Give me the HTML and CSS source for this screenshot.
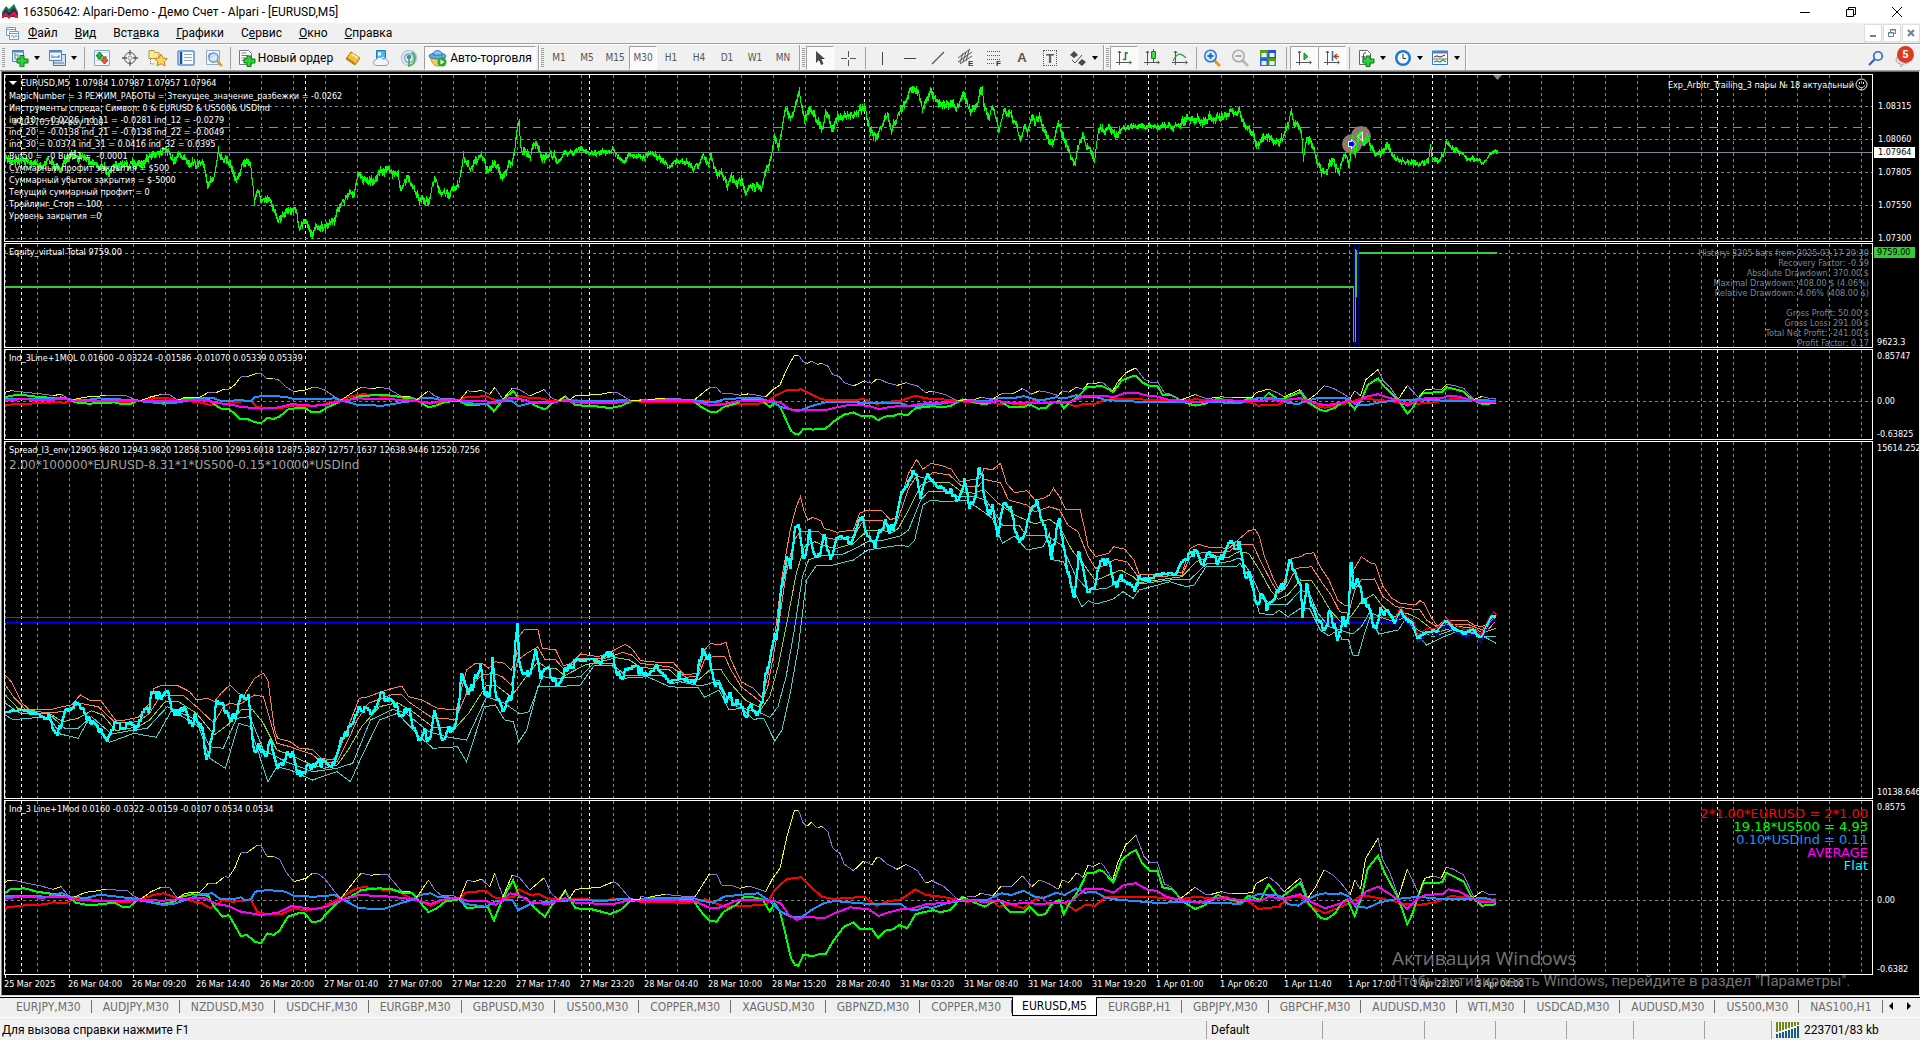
FILE: index.html
```html
<!DOCTYPE html>
<html lang="ru">
<head>
<meta charset="utf-8">
<title>16350642: Alpari-Demo - Демо Счет - Alpari - [EURUSD,M5]</title>
<link rel="stylesheet" href="styles.css">
</head>
<body>
<header class="titlebar">
  <svg class="logo" width="18" height="15" viewBox="0 0 18 15"><path d="M1 8 5 2l3 3 5-5 4 8v3H1z" fill="#1f7a3a"/><path d="M1 11 5 5l3 4 5-5 4 6v3H1z" fill="#23237d"/><path d="m1 12 4-4 3 4 5-5 4 5v2h-3l-2-3-4 4-3-3-2 2H1z" fill="#e0202a"/></svg>
  <h1>16350642: Alpari-Demo - Демо Счет - Alpari - [EURUSD,M5]</h1>
  <div class="win-controls">
    <button aria-label="Свернуть"><svg width="12" height="12"><path d="M1 6.500h10" stroke="#000"/></svg></button>
    <button aria-label="Восстановить"><svg width="12" height="12" fill="none" stroke="#000"><path d="M1.500 3.500h7v7h-7zM3.500 3.500v-2h7v7h-2"/></svg></button>
    <button aria-label="Закрыть"><svg width="12" height="12"><path d="M1 1l10 10M11 1 1 11" stroke="#000"/></svg></button>
  </div>
</header>

<nav class="menubar">
  <svg class="doc-icon" width="15" height="15" viewBox="0 0 15 15" fill="#fff" stroke="#6d9be0"><path d="M1.500 1.500h9v8h-9zM1 3.500h9"/><path d="M4.500 5.500h9v8h-9zM4 7.500h9"/><path d="M6 11l1.500-2 1.500 3 2-3 1 2" fill="none"/></svg>
  <button><u>Ф</u>айл</button><button><u>В</u>ид</button><button>Вст<u>а</u>вка</button><button><u>Г</u>рафики</button><button>С<u>е</u>рвис</button><button><u>О</u>кно</button><button><u>С</u>правка</button>
  <div class="mdi-controls">
    <button aria-label="Свернуть окно"><svg width="10" height="10"><path d="M2 8h6" stroke="#6d7f95" stroke-width="2"/></svg></button>
    <button aria-label="Восстановить окно"><svg width="10" height="10" fill="none" stroke="#6d7f95"><path d="M1.500 4.500h5v4h-5zM1 5h6M3.500 4V1.500h5v4H7M3 2h6"/></svg></button>
    <button aria-label="Закрыть окно"><svg width="10" height="10"><path d="M2 2l6 6M8 2 2 8" stroke="#6d7f95" stroke-width="2"/></svg></button>
  </div>
</nav>

<div class="toolbar">
  <div class="group">
    <span class="grip"></span>
    <button class="tool drop" aria-label="Новый график"><svg width="18" height="18"><path d="M1.500 1.500h11v11h-11z" fill="#eaf3fc" stroke="#4d87c4"/><path d="M1 2.500h12" stroke="#4d87c4" stroke-width="2"/><path d="M4 4v6h7M4 6h2m1-1v4" stroke="#678" fill="none"/><path d="M9 9.500V6.500h4v3.500h4v4h-4v4H9v-4H6v-4z" fill="#2fcf3a" stroke="#0a7a14"/></svg></button>
    <button class="tool drop" aria-label="Профили"><svg width="18" height="18"><path d="M5.500 5.500h12v11h-12z" fill="#cfe2f6" stroke="#3f78b5"/><path d="M1.500 1.500h12v10h-12z" fill="#eaf3fc" stroke="#4d87c4"/><path d="M1 2.500h13" stroke="#4d87c4" stroke-width="2"/><path d="M4 8h7M4 6v3m7-3v3M6 14h10" stroke="#678" fill="none"/></svg></button>
    <span class="sep"></span>
    <button class="tool" aria-label="Обзор рынка"><svg width="18" height="18"><path d="M1.500 1.500h15v15h-15z" fill="#f4f9ff" stroke="#7eaad6"/><path d="M3 3.500h12M3 7.500h12M3 11.500h12" stroke="#c6d8ea"/><path d="M6.500 3 10 7H8v3H5V7H3z" fill="#2fb72f" stroke="#117a11"/><path d="M11.500 15 8 11h2V8h3v3h2z" fill="#f0622c" stroke="#a6310b"/></svg></button>
    <button class="tool" aria-label="Окно данных"><svg width="18" height="18" fill="none" stroke="#555"><circle cx="9" cy="9" r="5.500"/><circle cx="9" cy="9" r="2" stroke="#999"/><path d="M9 1v5m0 6v5M1 9h5m6 0h5" stroke-width="1.300"/></svg></button>
    <button class="tool" aria-label="Навигатор"><svg width="20" height="18"><path d="M1 1.500h5l1 2h4v6H1z" fill="#f9e9a0" stroke="#b99632"/><path d="M2.500 10v5H7" fill="none" stroke="#777" stroke-dasharray="1 1"/><path d="m13 5 2 4 4.500.6-3.200 3.100.8 4.300-4.100-2.200L9 17l.7-4.300L6.500 9.600 11 9z" fill="#fbd45a" stroke="#b98a1e"/></svg></button>
    <button class="tool" aria-label="Терминал"><svg width="18" height="18"><rect x="1" y="2" width="16" height="14" rx="1" fill="#f5f9ff" stroke="#5a93cf" stroke-width="1.500"/><path d="M4 3v12" stroke="#1f4f86" stroke-width="2.500"/><path d="M7 5.500h8M7 8.500h8M7 11.500h8" stroke="#9aa9ba"/></svg></button>
    <button class="tool" aria-label="Тестер стратегий"><svg width="18" height="18"><path d="M1.500 1.500h13v14h-13z" fill="#f3f7fc" stroke="#8fabc9"/><path d="M3 8l2-4 2 5 2-4 2 2" fill="none" stroke="#778"/><circle cx="8.500" cy="8.500" r="4.500" fill="#cfe5fb" fill-opacity=".8" stroke="#6a96c8" stroke-width="1.500"/><path d="m12 12 5 5" stroke="#d5a11e" stroke-width="2.500"/></svg></button>
    <span class="sep slim"></span>
    <button class="tool wide"><svg width="18" height="18"><path d="M1.500 1.500h9l3 3v11h-12z" fill="#fff" stroke="#778"/><path d="M3.500 4h5M3.500 6.500h7M3.500 9h5M3.500 11.500h4" stroke="#778"/><path d="M9 9.500V7h4v3h4v4h-4v3.500H9V14H6v-4z" fill="#2fcf3a" stroke="#0a7a14"/></svg>Новый ордер</button>
    <button class="tool" aria-label="MetaEditor"><svg width="18" height="18"><path d="M2 10 7 3l9 6-5 7z" fill="#f3c33f" stroke="#a87412"/><path d="m2 10 9 6v-2.500L3 8z" fill="#c8870f"/><path d="m8 5 6 4" stroke="#fdf0b0" stroke-width="2"/></svg></button>
    <button class="tool" aria-label="Облако"><svg width="18" height="18"><path d="M4.500 1.500h9v9h-9z" fill="#4db8f0" stroke="#1c77c4"/><path d="M6 3.500h3v3H6z" fill="#fff"/><path d="M6 8.500h6" stroke="#fff"/><path d="M3.500 16.500a3 3 0 0 1 .5-5.800 4 4 0 0 1 7-.5 3.300 3.300 0 0 1 3.500 6.300z" fill="#f2f5fa" stroke="#8a9cb8"/></svg></button>
    <button class="tool" aria-label="Сигналы"><svg width="18" height="18" fill="none"><circle cx="9" cy="9" r="7.500" stroke="#b3c9df" stroke-width="1.500"/><circle cx="9" cy="9" r="4.500" stroke="#7fa7cf" stroke-width="1.500"/><circle cx="9" cy="8" r="2.300" fill="#2b8cd0"/><path d="M9 9v8a8 8 0 0 0 3-14" stroke="#4fb04f" stroke-width="1.800"/></svg></button>
    <button class="tool wide pressed auto" aria-pressed="true"><svg width="20" height="18"><path d="M2 8c2 6 4 9 8 9s6-3 7-9z" fill="#f6cf57" stroke="#b98d22"/><ellipse cx="9.500" cy="7" rx="8.500" ry="3" fill="#62a9dc" stroke="#2e78b0"/><path d="M5 6c0-6 9-6 9 0z" fill="#8ac6ee" stroke="#2e78b0"/><circle cx="14" cy="13" r="4.500" fill="#1fae2a"/><path d="m12.500 10.500 4 2.500-4 2.500z" fill="#fff"/></svg>Авто-торговля</button>
  </div>
  <div class="group">
    <span class="grip"></span>
    <button class="tool">M1</button><button class="tool">M5</button><button class="tool">M15</button><button class="tool pressed" aria-pressed="true">M30</button><button class="tool">H1</button><button class="tool">H4</button><button class="tool">D1</button><button class="tool">W1</button><button class="tool">MN</button>
  </div>
  <div class="group">
    <span class="grip"></span>
    <button class="tool pressed" aria-label="Курсор" aria-pressed="true"><svg width="18" height="18"><path d="M5 2v12l3-3 2 5 2.500-1-2-5H14z" fill="#4a4a4a"/></svg></button>
    <button class="tool" aria-label="Перекрестие"><svg width="18" height="18"><path d="M9.500 2v6m0 3v6M2 9.500h6m3 0h6" stroke="#555"/></svg></button>
    <span class="sep mid"></span>
    <button class="tool" aria-label="Вертикальная линия"><svg width="18" height="18"><path d="M9.500 3v13" stroke="#444"/></svg></button>
    <button class="tool" aria-label="Горизонтальная линия"><svg width="18" height="18"><path d="M3 9.500h12" stroke="#444"/></svg></button>
    <button class="tool" aria-label="Трендовая линия"><svg width="18" height="18"><path d="M3 15 15 3" stroke="#555" stroke-width="1.200"/></svg></button>
    <button class="tool" aria-label="Канал"><svg width="18" height="20"><path d="M1 10 13 1M1 14 15 4M3 16 15 8M3 15 6 5m0 9L9 4m0 9 3-11" stroke="#555" fill="none"/><text x="11" y="18" class="glyph">E</text></svg></button>
    <button class="tool" aria-label="Фибоначчи"><svg width="18" height="20"><path d="M2 3.500h14M2 7.500h14M2 11.500h14M2 15.500h8" stroke="#555" stroke-dasharray="1 1"/><text x="11" y="18" class="glyph">F</text></svg></button>
    <button class="tool letter" aria-label="Текст">A</button>
    <button class="tool letter" aria-label="Метка"><span class="boxed">T</span></button>
    <button class="tool drop" aria-label="Стрелки"><svg width="18" height="18" fill="#4a4a4a"><path d="m1 6 4-4 4 4-4 3zM17 13l-4 4-4-3 4-4z"/><path d="m3 11 3 3 7-8" fill="none" stroke="#4a4a4a"/></svg></button>
  </div>
  <div class="group">
    <span class="grip"></span>
    <button class="tool pressed" aria-label="Бары" aria-pressed="true"><svg width="18" height="18" fill="none" stroke="#555"><path d="M4.500 2v14M1 13.500h15M3 4l1.500-2L6 4m8.500 8 2 1.500-2 1.500"/><path d="M10.500 3v8M10 4h3M8 10.500h3" stroke="#1a8a1a" stroke-width="1.500"/></svg></button>
    <button class="tool" aria-label="Свечи"><svg width="18" height="18" fill="none" stroke="#555"><path d="M4.500 2v14M1 13.500h15M3 4l1.500-2L6 4m8.500 8 2 1.500-2 1.500"/><path d="M10.500 0v13" stroke="#1a8a1a"/><path d="M8.500 2.500h4v7h-4z" fill="#3fd64a" stroke="#1a8a1a"/></svg></button>
    <button class="tool" aria-label="Линия"><svg width="18" height="18" fill="none" stroke="#555"><path d="M4.500 2v14M1 13.500h15M3 4l1.500-2L6 4m8.500 8 2 1.500-2 1.500"/><path d="M2 12c4-8 7-9 13-3" stroke="#2a9a3a" stroke-width="1.200"/></svg></button>
    <span class="sep slim"></span>
    <button class="tool" aria-label="Увеличить"><svg width="18" height="18"><path d="m11 11 6 6" stroke="#d5a11e" stroke-width="3"/><circle cx="7.500" cy="7" r="5.800" fill="#d9ecfb" stroke="#2f78c4" stroke-width="1.500"/><path d="M4.500 7h6m-3-3v6" stroke="#1f6cc0" stroke-width="2"/></svg></button>
    <button class="tool" aria-label="Уменьшить"><svg width="18" height="18"><path d="m11 11 6 6" stroke="#bbb" stroke-width="3"/><circle cx="7.500" cy="7" r="5.800" fill="#eee" stroke="#aaa" stroke-width="1.500"/><path d="M4.500 7h6" stroke="#aaa" stroke-width="2"/></svg></button>
    <button class="tool" aria-label="Упорядочить"><svg width="18" height="18"><path d="M1 1h8v8H1z" fill="#4da01c"/><path d="M9 1h8v8H9z" fill="#2553c4"/><path d="M1 9h8v8H1z" fill="#2a62d8"/><path d="M9 9h8v8H9z" fill="#4da01c"/><path d="M2.500 4h5v4h-5zM10.500 4h5v4h-5zM2.500 12h5v4h-5zM10.500 12h5v4h-5z" fill="#e6f0fb"/></svg></button>
    <span class="sep"></span>
    <button class="tool pressed" aria-label="Автосдвиг" aria-pressed="true"><svg width="18" height="18" fill="none" stroke="#555"><path d="M4.500 2v14M1 13.500h15M3 4l1.500-2L6 4m8.500 8 2 1.500-2 1.500"/><path d="m9 4 4 3.500L9 11z" fill="#2fc43a" stroke="#138a1c"/></svg></button>
    <button class="tool pressed" aria-label="Сдвиг графика" aria-pressed="true"><svg width="18" height="18" fill="none" stroke="#555"><path d="M4.500 2v14M1 13.500h15M3 4l1.500-2L6 4m8.500 8 2 1.500-2 1.500"/><path d="M9.500 2v10" stroke="#2a6ab0" stroke-width="1.500"/><path d="M16 7.500h-4m2-2.500-3 2.500 3 2.500" stroke="#c2410c" stroke-width="1.300"/></svg></button>
    <span class="sep mid"></span>
    <button class="tool drop" aria-label="Индикаторы"><svg width="18" height="18"><path d="M2.500 1.500h8l3 3v11h-11z" fill="#fff" stroke="#666"/><path d="M9 4c-3-1-2.500 2-3 9M4.500 8H8" fill="none" stroke="#333"/><path d="M9 9.500V7h4v3h4v4h-4v3.500H9V14H6v-4z" fill="#2fcf3a" stroke="#0a7a14"/></svg></button>
    <button class="tool drop" aria-label="Периоды"><svg width="18" height="18"><circle cx="9" cy="9" r="8" fill="#1e78d0"/><circle cx="9" cy="9" r="5.500" fill="#f3f8fd"/><path d="M9 5v4.500h3" fill="none" stroke="#234"/></svg></button>
    <button class="tool drop" aria-label="Шаблоны"><svg width="18" height="18"><path d="M1.500 2.500h15v13h-15z" fill="#fff" stroke="#3f78b5"/><path d="M1 3h16" stroke="#3f88cf" stroke-width="3"/><path d="M3 8l3-1 3 1 5-2" fill="none" stroke="#a33a14" stroke-width="1.300"/><path d="M2 10h14" stroke="#3f78b5"/><path d="m3 13 3-1 3 1 3-2 3 2" fill="none" stroke="#2a9a3a" stroke-width="1.300"/></svg></button>
  </div>
  <div class="corner">
    <button class="tool" aria-label="Поиск"><svg width="16" height="16" fill="none"><circle cx="10" cy="6" r="4.300" stroke="#2a62c8" stroke-width="1.600"/><path d="m7 9-6 6" stroke="#2a62c8" stroke-width="2.200"/></svg></button>
    <button class="tool chat" aria-label="Сообщения"><svg width="18" height="18"><path d="M1 10c0-6 14-6 14 0 0 4-5 5-7 5l-2 3v-3C3 15 1 13 1 10z" fill="#e2e2e6" stroke="#aaa"/></svg><span class="badge">5</span></button>
  </div>
</div>

<main class="workspace">
  <section class="panel price">
    <div class="plot">
      <svg id="price" viewBox="5 75 1867 166" preserveAspectRatio="none"></svg>
      <div class="note order">#403705134 buy 1.00</div>
      <div class="note head"><span class="tri"></span>EURUSD,M5&nbsp; 1.07984 1.07987 1.07957 1.07964</div>
      <div class="note comments">MagicNumber = 3 РЕЖИМ_РАБОТЫ = 3текущее_значение_разбежки = -0.0262<br>Инструменты спреда; Символ: 0 &amp; EURUSD &amp; US500&amp; USDInd<br>ind_10 = -0.0226 ind_11 = -0.0281 ind_12 = -0.0279<br>ind_20 = -0.0138 ind_21 = -0.0138 ind_22 = -0.0049<br>ind_30 = 0.0374 ind_31 = 0.0416 ind_32 = 0.0395<br>Buf50 =&nbsp; -0 Buf51 =&nbsp; -0.0001<br>Суммарный профит закрытия = $500<br>Суммарный убыток закрытия = $-5000<br>Текущий суммарный профит = 0<br>Трейлинг_Стоп = 100<br>Уровень закрытия =0</div>
      <div class="note expert">Exp_Arbitr_Trailing_3 пары № 18 актуальный<svg width="13" height="13" fill="none" stroke="#fff"><circle cx="6.500" cy="6.500" r="5.500"/><path d="M3.500 7.500c1 3 5 3 6 0M4.500 4v2m4-2v2"/></svg></div>
    </div>
    <div class="axis"><span>1.08315</span><span>1.08060</span><span>1.07805</span><span>1.07550</span><span>1.07300</span><b class="tag">1.07964</b></div>
  </section>
  <section class="panel equity">
    <div class="plot">
      <svg id="equity" viewBox="5 244 1867 103" preserveAspectRatio="none"></svg>
      <div class="note name">Equity_virtual Total 9759.00</div>
      <div class="note stats">History: 3205 bars from 2025.03.17 20:30<br>Recovery Factor: -0.59<br>Absolute Drawdown: 370.00 $<br>Maximal Drawdown: 408.00 $ (4.06%)<br>Relative Drawdown: 4.06% (408.00 $)<br><br>Gross Profit: 50.00 $<br>Gross Loss: 291.00 $<br>Total Net Profit: -241.00 $<br>Profit Factor: 0.17</div>
    </div>
    <div class="axis"><b class="tag">9759.00</b><span>9623.3</span></div>
  </section>
  <section class="panel mql">
    <div class="plot">
      <svg id="mql" viewBox="5 350 1867 89" preserveAspectRatio="none"></svg>
      <div class="note name">Ind_3Line+1MQL 0.01600 -0.03224 -0.01586 -0.01070 0.05339 0.05339</div>
    </div>
    <div class="axis"><span>0.85747</span><span>0.00</span><span>-0.63825</span></div>
  </section>
  <section class="panel spread">
    <div class="plot">
      <svg id="spread" viewBox="5 442 1867 356" preserveAspectRatio="none"></svg>
      <div class="note name">Spread_I3_env 12905.9820 12943.9820 12858.5100 12993.6018 12875.3827 12757.1637 12638.9446 12520.7256</div>
      <div class="note formula">2.00*100000*EURUSD-8.31*1*US500-0.15*10000*USDInd</div>
    </div>
    <div class="axis"><span>15614.252</span><span>10138.646</span></div>
  </section>
  <section class="panel mod">
    <div class="plot">
      <svg id="mod" viewBox="5 801 1867 173" preserveAspectRatio="none"></svg>
      <div class="note name">Ind_3 Line+1Mod 0.0160 -0.0322 -0.0159 -0.0107 0.0534 0.0534</div>
      <div class="note legend"><span class="red">2*1.00*EURUSD = 2*1.00</span><span class="lime">19.18*US500 = 4.93</span><span class="blue">0.10*USDInd = 0.11</span><span class="magenta">AVERAGE</span><span class="aqua">Flat</span></div>
    </div>
    <div class="axis"><span>0.8575</span><span>0.00</span><span>-0.6382</span></div>
  </section>
  <div class="timeline"><span>25 Mar 2025</span><span>26 Mar 04:00</span><span>26 Mar 09:20</span><span>26 Mar 14:40</span><span>26 Mar 20:00</span><span>27 Mar 01:40</span><span>27 Mar 07:00</span><span>27 Mar 12:20</span><span>27 Mar 17:40</span><span>27 Mar 23:20</span><span>28 Mar 04:40</span><span>28 Mar 10:00</span><span>28 Mar 15:20</span><span>28 Mar 20:40</span><span>31 Mar 03:20</span><span>31 Mar 08:40</span><span>31 Mar 14:00</span><span>31 Mar 19:20</span><span>1 Apr 01:00</span><span>1 Apr 06:20</span><span>1 Apr 11:40</span><span>1 Apr 17:00</span><span>1 Apr 22:20</span><span>2 Apr 04:00</span></div>
  <div class="watermark"><strong>Активация Windows</strong><span>Чтобы активировать Windows, перейдите в раздел "Параметры".</span></div>
</main>

<nav class="tabs">
  <button>EURJPY,M30</button><button>AUDJPY,M30</button><button>NZDUSD,M30</button><button>USDCHF,M30</button><button>EURGBP,M30</button><button>GBPUSD,M30</button><button>US500,M30</button><button>COPPER,M30</button><button>XAGUSD,M30</button><button>GBPNZD,M30</button><button>COPPER,M30</button><button class="active" aria-current="true">EURUSD,M5</button><button>EURGBP,H1</button><button>GBPJPY,M30</button><button>GBPCHF,M30</button><button>AUDUSD,M30</button><button>WTI,M30</button><button>USDCAD,M30</button><button>AUDUSD,M30</button><button>US500,M30</button><button>NAS100,H1</button>
  <div class="scroll"><button aria-label="Назад"><svg width="6" height="8"><path d="M5 0v8L1 4z"/></svg></button><button aria-label="Вперед"><svg width="6" height="8"><path d="M1 0v8l4-4z"/></svg></button></div>
</nav>

<footer class="status">
  <span class="hint">Для вызова справки нажмите F1</span>
  <span class="cell w116">Default</span><span class="cell w102"></span><span class="cell w71"></span><span class="cell w71"></span><span class="cell w67"></span><span class="cell w71"></span><span class="cell w67"></span>
  <span class="cell net"><svg width="24" height="16"><path d="M1 0v10M4 0v9M7 0v8M10 0v7M13 0v6M16 0v5M19 0v4M22 0v3" stroke="#6f8a1c" stroke-width="2"/><path d="M1 16v-4M4 16v-5M7 16v-6M10 16V9M13 16V8M16 16V7M19 16V6M22 16V4" stroke="#1a5a86" stroke-width="2"/></svg>223701/83 kb</span>
</footer>
<script src="chart.js"></script>
</body>
</html>
```
FILE: styles.css
```css
:root {
  --ui: Roboto, "Noto Sans", sans-serif;
  --chart: "DejaVu Sans Condensed", "DejaVu Sans", sans-serif;
  --face: #f0f0f0;
  --grid: #778899;
}
* { box-sizing: border-box; }
body {
  margin: 0;
  height: 100vh;
  display: flex;
  flex-direction: column;
  background: var(--face);
  font: 12px/16px var(--ui);
  color: #000;
  overflow: hidden;
}
button { border: 0; background: none; padding: 0; margin: 0; font: inherit; color: inherit; }
svg { display: block; flex: none; }

.titlebar { height: 23px; background: #fff; display: flex; align-items: center; padding-left: 1px; flex: none; }
.titlebar h1 { margin: 0 0 0 4px; font: inherit; }
.win-controls { margin-left: auto; display: flex; }
.win-controls button { width: 46px; height: 20px; display: grid; place-items: center; }

.menubar { height: 20px; display: flex; align-items: center; padding-left: 5px; flex: none; }
.menubar > button { padding: 0 9px 0 8px; }
.mdi-controls { margin-left: auto; display: flex; gap: 1px; }
.mdi-controls button { width: 18px; height: 18px; background: #fff; border: 1px solid #dedede; display: grid; place-items: center; }

.toolbar { height: 28px; border-top: 1px solid #a0a0a0; box-shadow: inset 0 1px #fff; border-bottom: 1px solid #a0a0a0; display: flex; padding-top: 1px; flex: none; }
.group { display: flex; align-items: center; padding-right: 2px; border-right: 1px solid #a0a0a0; box-shadow: 1px 0 #fff; }
.grip { width: 3px; height: 20px; margin: 0 1px 0 2px; background: repeating-linear-gradient(#a0a0a0 0 1px, #f0f0f0 1px 2px); }
.tool { width: 28px; height: 24px; display: flex; align-items: center; justify-content: center; color: #555; font: 10px/14px var(--chart); }
.drop { width: 37px; justify-content: flex-start; padding-left: 5px; gap: 5px; }
.drop::after { content: ""; border: 3px solid transparent; border-top: 4px solid #000; border-bottom: 0; }
.wide { width: 107px; color: #000; font: 12px/16px var(--ui); gap: 2px; }
.auto { width: 112px; margin-left: 1px; }
.pressed { background: #fafafa; border: 1px solid #a0a0a0; border-right-color: #fff; border-bottom-color: #fff; }
.letter { font: bold 13px/16px "Liberation Sans", sans-serif; }
.boxed { border: 1px dotted #555; width: 14px; height: 16px; line-height: 15px; text-align: center; }
.glyph { font: bold 8px "Liberation Sans", sans-serif; fill: #333; stroke: none; }
.sep { width: 8px; height: 22px; background: linear-gradient(#a0a0a0, #a0a0a0) center / 1px 100% no-repeat; }
.sep.slim { width: 4px; }
.sep.mid { width: 6px; }
.corner { margin-left: auto; display: flex; align-items: center; padding-right: 2px; }
.chat { position: relative; }
.badge { position: absolute; left: 7px; top: 0; width: 17px; height: 17px; border-radius: 50%; background: #dd3a22; color: #fff; font: bold 11px/17px var(--ui); text-align: center; }

.workspace {
  flex: 1;
  min-height: 0;
  display: flex;
  flex-direction: column;
  gap: 1px;
  position: relative;
  background: #000;
  color: #fff;
  font: 9px/12px var(--chart);
  margin: 0 1px 0 1px;
  border-left: 1px solid #808080;
  border-top: 1px solid #696969;
  padding: 2px 0 0 2px;
}
.panel { display: flex; min-height: 0; flex-basis: 0; }
.price { flex-grow: 168; }
.equity { flex-grow: 105; }
.mql { flex-grow: 91; }
.spread { flex-grow: 358; }
.mod { flex-grow: 175; }
.plot { flex: 1; border: 1px solid #fff; position: relative; overflow: hidden; min-width: 0; }
.plot > svg { width: 100%; height: 100%; }
.axis { width: 46px; flex: none; position: relative; white-space: nowrap; padding-left: 4px; display: flex; flex-direction: column; justify-content: space-between; }
.price .axis { padding-top: 26px; justify-content: flex-start; gap: 21px; padding-left: 5px; }
.equity .axis { padding: 4px 0 0 4px; }
.spread .axis { padding: 1px 0 1px 4px; }
.mql .axis, .mod .axis { display: grid; padding-top: 1px; grid-template-rows: auto 8fr auto 5fr auto; }
.mod .axis { grid-template-rows: auto 7fr auto 5fr auto; }
.axis span:nth-child(2) { grid-row: 3; }
.axis span:nth-child(3) { grid-row: 5; }
.tag { font-weight: normal; line-height: 11px; height: 11px; padding-left: 4px; margin-left: -4px; width: 41px; }
.equity .tag { background: #32cd32; color: #000; margin-left: -3px; padding-left: 3px; }
.price .tag { position: absolute; left: 1px; top: 73px; margin: 0; background: #fff; color: #000; }

.note { position: absolute; left: 4px; white-space: nowrap; }
.head { top: 2px; display: flex; align-items: center; }
.tri { border: 4px solid transparent; border-top: 4px solid #fff; border-bottom: 0; margin-right: 4px; }
.comments { top: 15px; }
.order { top: 41px; left: 7px; color: #d8e8d8; }
.expert { left: auto; right: 4px; top: 3px; display: flex; align-items: center; gap: 1px; }
.name { top: 2px; }
.stats { left: auto; right: 3px; top: 4px; text-align: right; line-height: 10px; color: var(--grid); }
.formula { top: 16px; font: 12px/14px "DejaVu Sans", sans-serif; color: #a0a0a0; }
.legend { left: auto; right: 4px; top: 6px; display: flex; flex-direction: column; align-items: flex-end; font: 13px/13px "DejaVu Sans", sans-serif; }
.red { color: #f00; }
.lime { color: #0f0; }
.blue { color: #1e90ff; }
.magenta { color: #f0f; }
.aqua { color: #0ff; }

.timeline { display: flex; height: 20px; flex: none; margin-top: -1px; }
.timeline span { width: 64px; flex: none; white-space: nowrap; padding-top: 3px; position: relative; }
.timeline span::before { content: ""; position: absolute; left: 1px; top: 0; width: 1px; height: 3px; background: #fff; }
.watermark { position: absolute; left: 1390px; bottom: 4px; display: flex; flex-direction: column; color: #747474; font: 15px/20px var(--ui); white-space: nowrap; }
.watermark strong { font: 19px/26px "Open Sans", sans-serif; }

.tabs { height: 23px; flex: none; display: flex; align-items: flex-start; border-top: 1px solid #d0d0d0; color: #6d6d6d; padding-left: 5px; border-bottom: 1px solid #fff; background: linear-gradient(#fff 0 1px, #000 1px 2px, #f0f0f0 2px); font: 12px/14px var(--chart); }
.tabs > button { height: 21px; padding: 1px 11px 0; position: relative; flex: none; }
.tabs > button::after { content: ""; position: absolute; right: 0; top: 4px; height: 13px; border-right: 1px solid #6d6d6d; }
.tabs > .active { background: #fff; color: #000; border: 1px solid #000; border-top: 0; height: 19px; margin-top: 1px; padding: 0 9px; }
.tabs > .active::after { display: none; }
.scroll { margin-left: auto; display: flex; gap: 12px; padding: 6px 8px 0 0; }

.status { height: 22px; flex: none; display: flex; padding-top: 3px; line-height: 18px; padding-left: 2px; }
.hint { flex: 1; }
.cell { border-left: 1px solid #a0a0a0; padding-left: 4px; height: 18px; }
.w116 { width: 116px; }
.w102 { width: 102px; }
.w71 { width: 71px; }
.w67 { width: 67px; }
.net { width: 149px; display: flex; align-items: center; gap: 4px; }
```
FILE: chart.js
```js
const NS = 'http://www.w3.org/2000/svg';
const SLATE = '#778899';
const DAYS = [21, 305, 589, 864, 1148, 1432, 1717];

function path(svg, d, stroke, width = 1, dash) {
  const p = document.createElementNS(NS, 'path');
  p.setAttribute('d', d);
  p.setAttribute('fill', 'none');
  p.setAttribute('stroke', stroke);
  p.setAttribute('stroke-width', width);
  p.setAttribute('shape-rendering', 'crispEdges');
  if (dash) p.setAttribute('stroke-dasharray', dash);
  svg.append(p);
}

// Small deterministic generator for the bar ranges.
let state = 7;
function rand() {
  state = (state * 16807) % 2147483647;
  return state / 2147483647;
}

function grid(svg, rows, y0, y1) {
  for (let x = 5; x < 1872; x += 32) path(svg, `M${x + 0.5} ${y0}V${y1}`, SLATE, 1, '3 3');
  DAYS.forEach(x => path(svg, `M${x + 0.5} ${y0}V${y1}`, '#fff', 1, '3 3'));
  rows.forEach(y => path(svg, `M5 ${y + 0.5}H1872`, SLATE, 1, '3 3'));
}

const nums = s => {
  const n = s.trim().split(/[\s,]+/).map(Number), out = [];
  for (let i = 0; i < n.length; i += 2) out.push([n[i], n[i + 1]]);
  return out;
};
// Each series is stored in consecutive blocks with their own origin and horizontal scale.
const join = (blocks, origins, base, yscale = 3) =>
  blocks.flatMap((s, i) => nums(s).map(([x, y]) => [origins[i][0] + x / origins[i][1], base + y / yscale]));
const line = pts => 'M' + pts.map(p => p[0].toFixed(1) + ' ' + p[1].toFixed(1)).join('L');

function at(pts, x) {
  let i = 1;
  while (i < pts.length - 1 && pts[i][0] < x) i++;
  const [a, b] = [pts[i - 1], pts[i]];
  return b[0] === a[0] ? b[1] : a[1] + (b[1] - a[1]) * Math.min(1, Math.max(0, (x - a[0]) / (b[0] - a[0])));
}
// Bar ranges are narrow in the quiet sessions and wide in the active ones.
const range = x => (x > 555 && x < 705) || (x > 1120 && x < 1180) ? 4 : x > 1455 ? 3 : x > 1390 ? 4 : 6;
function bars(pts) {
  let d = '', c = 0;
  for (let x = pts[0][0]; x <= pts[pts.length - 1][0]; x++) {
    const amp = range(x);
    c = c * 0.5 + (rand() - 0.5) * amp;
    const y = at(pts, x) + c, r = (0.4 + rand()) * amp / 2;
    d += `${d ? 'L' : 'M'}${x + 0.5} ${(y - r).toFixed(1)}V${(y + r).toFixed(1)}`;
  }
  return d;
}

/* ---- price ---- */
const price = document.getElementById('price');
grid(price, [106, 139, 172, 205, 238], 75, 241);
path(price, 'M5 127.5H1872', '#32cd32', 1, '9 6 3 6');
path(price, 'M5 152.5H1872', SLATE);
const quote = nums(`5,160 21,159 32,163 43,164 50,161 59,169 70,158 80,155 89,159 102,168 111,171 118,165 125,167 132,164 143,162 152,152 168,151 173,159 184,154 189,161 196,163 204,167 207,183 214,178 218,155 225,158 230,165 236,178 238,172 245,161 250,164 254,200 257,190 261,201 270,203 279,218 286,210 296,207 299,230 304,222 311,233 316,230 329,223 334,218 343,200 354,190 357,178 364,180 373,180 382,169 388,172 398,177 400,190 409,178 412,188 420,200 429,200 434,182 445,196 459,183 463,158 469,168 481,154 487,171 493,163 502,175 511,162 514,156 517,127 519,126 520,150 530,155 536,141 541,155 544,160 550,155 557,160 564,152 573,153 579,150 589,153 605,152 613,148 615,155 622,161 632,154 644,157 652,154 660,159 667,166 679,162 687,162 693,168 699,164 703,152 708,168 710,156 716,175 722,176 727,187 731,178 735,185 742,180 745,190 756,185 760,190 763,186 764,175 769,163 772,150 774,138 778,145 782,128 785,110 791,118 795,105 799,92 804,118 810,108 816,120 822,128 825,114 832,128 837,116 844,114 854,116 860,106 865,112 869,128 876,138 883,122 887,115 891,130 897,117 905,101 909,93 918,92 922,108 928,92 931,92 935,99 948,106 958,106 964,95 970,112 977,106 979,92 982,88 983,102 989,116 992,106 998,130 1004,112 1011,114 1015,125 1021,138 1024,126 1027,134 1031,115 1034,123 1039,117 1043,128 1051,144 1058,127 1062,132 1067,147 1071,160 1074,166 1079,142 1083,135 1087,148 1094,160 1098,130 1108,130 1117,135 1122,129 1136,126 1138,129 1150,126 1163,125 1172,127 1182,123 1187,117 1190,121 1197,116 1204,124 1210,115 1220,118 1227,116 1232,112 1239,112 1242,122 1248,130 1253,132 1255,144 1259,146 1263,139 1268,138 1275,147 1283,137 1288,126 1291,112 1293,121 1297,121 1301,131 1303,158 1305,146 1307,139 1312,143 1315,154 1321,172 1327,168 1332,157 1335,167 1339,170 1343,155 1349,165 1352,134 1355,154 1357,136 1360,130 1363,144 1367,136 1369,146 1376,152 1382,152 1387,145 1392,156 1400,160 1410,163 1418,165 1428,162 1430,147 1432,161 1437,160 1443,154 1446,141 1450,148 1462,153 1467,160 1475,159 1483,164 1488,156 1495,149 1497,152`);
price.insertAdjacentHTML('beforeend', '<g fill="#8b7b6f"><circle cx="1352" cy="144" r="10"/><circle cx="1361" cy="136" r="10"/></g>');
path(price, bars(quote), '#0f0');
price.insertAdjacentHTML('beforeend', '<path d="M1348.500 141.500h3v-2l4 4.500-4 4.500v-2h-3z" fill="#00f" stroke="#fff"/><path d="M1362.500 132v9l-5-4.500z" fill="none" stroke="#fff"/><path d="M1493 75h9l-4.500 5z" fill="#778899"/>');

/* ---- equity ---- */
const equity = document.getElementById('equity');
grid(equity, [], 244, 347);
path(equity, 'M5 253.5H1872', '#32cd32', 1, '3 3');
path(equity, 'M1354.500 244V347M1358.500 244V347', '#000080');
path(equity, 'M5 287H1353M1359 253H1497', '#32cd32', 2);
path(equity, 'M1353.500 286V342M1355.500 249V342', '#32cd32');
path(equity, 'M1356 250V297', '#32cd32', 2);

/* ---- three-line indicator, drawn in two panels ---- */
const THIRDS = [[0, 2.45], [640, 2.45], [1280, 2.45]];
const lines = {
  red: ['12,323 60,316 110,313 130,307 160,310 185,295 220,298 245,302 270,305 300,305 320,305 345,298 375,285 400,280 430,292 460,300 495,310 515,325 530,315 545,300 570,305 590,303 615,300 630,335 650,342 690,342 720,325 750,332 790,322 810,308 835,293 865,270 890,260 940,270 975,272 1000,290 1030,305 1055,317 1090,298 1125,295 1140,278 1190,272 1210,292 1230,296 1260,290 1270,268 1300,285 1320,282 1345,298 1390,296 1480,300 1520,296 1568,303',
    '0,305 50,307 120,308 160,298 185,310 210,320 260,318 310,313 330,270 360,237 395,232 420,262 445,290 475,297 550,290 580,318 600,306 640,298 675,268 700,285 740,290 780,300 800,305 860,300 880,320 905,312 940,325 965,300 985,292 1005,318 1025,302 1040,310 1068,332 1090,315 1115,317 1140,292 1175,290 1260,292 1325,298 1360,290 1400,295 1440,292 1460,305 1490,303 1515,327 1568,320',
    '0,315 30,290 50,290 75,320 110,340 130,330 170,310 200,285 230,292 275,302 300,312 340,315 380,307 420,288 460,293 490,300 520,300 530,295'],
  lime: ['12,280 25,268 60,265 90,275 130,282 170,292 185,308 215,315 235,314 280,308 300,320 318,320 335,300 400,312 425,305 445,290 470,283 510,287 525,320 545,350 560,345 575,375 590,408 605,405 625,425 640,430 655,400 670,405 685,392 705,350 730,340 745,338 765,367 785,363 800,340 835,300 860,290 885,270 930,265 960,268 990,280 1010,280 1025,300 1050,337 1070,325 1090,305 1125,298 1145,325 1180,320 1195,320 1210,362 1230,300 1257,240 1272,290 1290,295 1310,325 1335,350 1355,310 1370,298 1385,272 1397,300 1410,325 1450,328 1495,342 1520,330 1545,303 1568,300',
    '0,298 60,300 130,300 150,335 170,362 188,365 205,335 235,315 255,290 270,290 300,298 318,335 330,310 343,335 355,395 370,475 380,495 388,497 400,465 425,468 440,462 455,462 475,420 500,380 523,367 540,387 568,387 583,413 600,392 620,388 635,375 655,385 675,343 700,335 720,330 735,337 760,330 790,290 820,308 845,320 865,305 880,300 905,335 940,336 955,320 975,345 993,343 1010,310 1028,300 1038,342 1050,315 1075,270 1095,220 1110,220 1125,210 1135,215 1160,247 1180,180 1200,160 1215,150 1230,190 1248,212 1268,212 1280,262 1305,268 1330,305 1360,327 1385,315 1415,285 1440,298 1460,300 1470,310 1490,287 1520,300 1540,253 1560,285',
    '0,295 50,248 70,310 100,355 115,357 135,340 150,310 165,298 183,348 200,290 215,205 240,167 255,215 275,260 290,295 312,373 325,340 335,300 350,250 375,250 398,247 408,218 430,232 450,245 470,292 495,317 530,313'],
  '#1e90ff': ['12,287 60,288 120,290 150,278 175,292 215,293 240,285 270,287 300,292 335,297 360,305 400,315 425,312 455,300 490,283 520,280 540,298 570,298 590,292 600,300 615,298 625,275 655,270 700,275 720,288 770,290 820,285 850,305 880,325 940,327 985,308 1010,300 1030,285 1055,280 1075,292 1125,293 1140,312 1190,320 1215,303 1255,300 1270,330 1300,312 1340,305 1380,302 1420,300 1480,303 1525,296 1568,300',
    '0,296 60,294 130,293 150,302 180,308 205,290 240,285 290,280 320,305 345,335 370,350 395,352 420,330 450,310 475,303 560,312 640,312 655,328 680,330 700,320 715,325 750,310 785,302 850,300 885,280 910,285 940,272 970,292 990,293 1020,278 1040,285 1070,265 1090,278 1115,275 1140,293 1160,297 1200,302 1260,308 1330,307 1420,308 1470,312 1500,290 1515,282 1568,287',
    '0,290 20,313 45,317 65,300 90,285 110,280 130,283 150,280 170,290 185,320 215,323 245,307 285,297 340,290 400,298 470,297 500,293 530,303'],
  magenta: ['12,295 50,290 100,293 160,290 190,300 240,302 290,302 350,300 400,302 450,296 500,293 530,312 560,318 590,335 640,345 680,338 715,318 770,328 800,320 835,300 880,285 960,290 1010,298 1055,312 1080,300 1120,293 1145,302 1190,302 1215,315 1250,280 1270,285 1300,305 1340,313 1385,295 1410,308 1500,313 1545,300 1568,302',
    '0,300 130,302 170,323 190,325 240,300 300,300 330,303 345,310 365,345 385,360 400,352 455,353 480,338 515,322 560,328 585,348 605,338 640,328 660,328 700,313 750,308 790,298 840,306 880,302 910,312 950,308 980,313 1010,308 1035,310 1060,300 1090,268 1135,268 1160,278 1185,255 1215,250 1245,270 1265,272 1290,290 1325,300 1370,308 1420,292 1470,300 1520,302 1540,290 1568,295',
    '0,298 50,283 75,305 110,325 150,310 170,298 185,315 210,275 240,260 260,275 285,295 312,327 335,298 355,285 400,282 412,268 440,275 465,292 490,305 530,305']
};
const envelope = ['12,250 18,243 30,240 60,248 100,258 130,268 150,260 170,292 180,292 210,277 235,273 260,267 285,270 310,270 330,290 345,297 370,275 395,262 415,262 435,295 450,282 465,278 490,277 510,250 530,250 550,230 560,232 575,205 590,158 605,158 630,136 640,138 655,170 670,168 685,178 700,215 720,245 750,235 765,220 780,222 795,235 820,275 835,296 870,240 885,220 910,226 930,222 950,225 985,275 1005,273 1020,293 1050,240 1065,270 1080,285 1110,285 1125,300 1145,240 1160,245 1180,238 1200,260 1212,220 1232,290 1255,225 1272,232 1298,270 1333,233 1350,280 1370,300 1385,270 1395,295 1410,268 1440,265 1470,262 1500,247 1512,250 1545,298 1568,297',
  '0,290 20,292 60,283 100,288 135,290 170,222 188,222 200,255 220,255 245,265 265,258 285,265 308,275 325,235 343,205 360,110 378,32 388,30 400,70 410,78 420,67 435,85 445,78 460,95 472,145 490,160 500,192 523,212 548,183 568,195 580,172 590,175 605,192 630,208 652,193 680,212 700,250 715,242 745,260 780,300 800,290 820,290 835,280 865,287 885,258 912,258 937,227 960,260 978,240 1000,250 1025,268 1035,240 1050,248 1070,218 1085,232 1098,195 1110,200 1128,188 1135,195 1158,240 1170,190 1190,135 1215,105 1235,170 1250,188 1268,188 1285,252 1300,260 1325,295 1360,262 1385,283 1400,283 1425,275 1450,282 1480,280 1500,278 1510,250 1540,230 1565,255',
  '0,262 10,275 50,233 68,295 85,265 108,210 130,225 150,250 172,285 183,240 197,268 210,175 240,115 252,180 270,220 290,290 312,208 330,255 340,280 355,235 375,228 395,235 408,202 425,208 450,225 475,292 495,273 512,284 530,284'];

function indicator(id, zero, scale, y0, y1) {
  const svg = document.getElementById(id);
  const place = s => join(s, THIRDS, -100).map(([x, y]) => [x, zero + y * scale]);
  grid(svg, [zero], y0, y1);
  for (const [colour, s] of Object.entries(lines)) path(svg, line(place(s)), colour, 2);
  const e = place(envelope);
  let up = '', down = '';
  for (let i = 1; i < e.length; i++) {
    const d = line([e[i - 1], e[i]]);
    if (e[i][1] < e[i - 1][1]) up += d; else down += d;
  }
  path(svg, down, 'mediumpurple');
  path(svg, up, 'yellow');
}
indicator('mql', 401, 0.51, 350, 439);
indicator('mod', 900, 1, 801, 974);

/* ---- spread ---- */
const spread = document.getElementById('spread');
grid(spread, [], 442, 798);
const WIDE = [[0, 2.24], [680, 2.45], [1240, 2.306]];
const bands = [
  ['mediumturquoise', '12,855 30,870 55,865 110,862 135,912 175,925 200,865 245,937 300,910 350,922 385,840 445,890 470,985 505,1015 535,880 560,890 600,1055 620,1010 650,1020 700,1050 755,1025 785,1055 810,980 850,870 890,850 940,920 970,955 1025,950 1045,995 1085,830 1110,825 1130,870 1150,875 1162,935 1180,900 1205,770 1250,770 1300,765 1330,708 1370,705 1395,745 1450,740 1500,770',
    '0,772 45,773 60,802 95,780 120,840 150,835 180,868 205,865 232,933 250,900 270,790 290,650 310,450 335,405 375,405 425,390 460,360 540,345 560,350 575,330 595,225 615,210 650,215 700,210 735,238 765,265 790,340 820,318 850,360 890,350 905,310 915,390 940,395 960,470 985,530 1000,512 1020,522 1060,508 1085,485 1110,505 1125,480 1200,455 1240,470 1260,465 1290,408 1365,408',
    '0,400 20,440 45,550 75,555 90,540 110,560 140,535 160,535 185,600 205,618 225,600 235,628 250,628 260,675 272,678 285,620 300,560 320,612 365,600 385,560 400,600 430,645 470,620 500,605 540,610 570,625 590,640'],
  ['mediumturquoise', '12,820 45,850 110,852 145,895 175,895 205,860 250,912 300,900 330,895 375,830 440,870 470,950 500,955 530,865 560,860 590,960 640,995 700,1025 755,1015 790,1000 830,870 880,838 910,850 960,905 1000,920 1045,930 1090,800 1130,820 1165,852 1185,845 1215,740 1250,745 1300,740 1330,700 1370,700 1400,735 1450,735 1480,735 1510,760',
    '0,755 50,768 75,760 95,750 115,800 140,830 200,850 220,862 240,830 260,740 280,600 300,440 315,390 340,378 400,372 430,355 460,335 500,330 540,318 560,300 590,210 610,183 650,185 680,200 720,200 750,210 790,285 830,285 850,318 895,315 935,345 970,440 1000,480 1045,475 1085,450 1115,478 1125,462 1200,450 1250,448 1290,402 1345,395 1365,386',
    '0,385 25,430 50,505 75,525 110,522 140,480 160,490 180,550 205,590 260,612 280,590 300,545 320,560 355,575 385,560 410,600 445,620 490,600 530,605 565,620 590,618'],
  ['yellowgreen', '12,795 40,835 110,850 140,875 175,865 205,842 230,855 260,902 310,890 335,870 370,815 400,815 440,850 480,915 510,885 540,840 565,838 590,880 620,960 660,980 690,1000 725,1015 755,1005 780,960 810,890 850,830 890,818 920,840 970,892 1020,893 1050,850 1090,765 1110,765 1145,800 1170,755 1205,695 1225,715 1245,715 1265,737 1310,705 1350,693 1380,683 1410,690 1435,712 1500,720',
    '0,748 45,750 75,718 100,718 120,755 160,810 200,835 220,800 240,710 260,590 285,430 305,350 330,335 360,350 385,355 425,340 460,300 500,302 520,308 535,295 560,240 590,165 610,155 660,158 690,185 720,190 745,178 780,220 820,255 870,282 905,268 930,290 960,360 990,405 1018,452 1050,435 1080,420 1110,440 1125,458 1170,450 1230,440 1265,395 1300,380 1345,382 1365,367',
    '0,365 20,370 45,420 70,480 88,508 110,495 140,450 165,452 185,490 210,545 235,578 255,560 280,515 308,493 330,530 355,560 385,550 410,565 445,600 460,605 500,590 530,592 560,608 590,595'],
  ['coral', '12,765 30,800 60,842 110,848 140,845 180,820 220,830 260,880 310,875 335,850 360,795 410,795 440,830 480,880 500,830 515,820 535,825 570,795 590,800 605,870 620,940 650,950 680,965 700,973 720,998 755,995 780,930 800,870 825,820 880,793 900,795 920,820 970,865 1020,868 1050,775 1080,735 1105,730 1125,740 1145,765 1160,690 1180,670 1205,650 1220,688 1245,690 1265,720 1300,685 1350,687 1395,667 1415,675 1435,700 1505,712',
    '0,730 15,742 45,738 60,690 80,680 110,680 125,720 150,770 200,818 215,770 240,600 260,430 280,330 295,305 340,305 355,322 385,330 425,320 445,280 455,271 495,271 515,287 530,280 545,230 560,175 580,138 600,145 620,127 660,135 690,168 730,170 745,148 785,158 805,210 850,225 870,245 905,230 930,240 950,285 975,305 1000,380 1018,415 1045,405 1065,388 1095,395 1125,445 1170,440 1230,435 1255,370 1300,368 1345,365 1365,343',
    '0,343 30,345 50,400 70,450 88,490 105,475 130,415 165,410 190,460 210,495 230,545 250,550 265,480 280,448 310,447 330,500 360,530 400,538 415,540 430,570 455,592 480,583 525,583 555,598 575,595 590,572'],
  ['coral', '12,735 25,755 50,820 65,838 110,840 140,830 160,825 180,795 200,810 225,810 260,873 280,870 310,862 335,820 345,775 365,765 400,768 425,785 440,810 465,805 480,815 495,790 515,765 530,785 545,800 570,745 590,730 600,750 615,900 622,925 650,935 670,955 700,958 720,985 745,990 755,975 780,890 805,805 825,800 855,785 880,775 900,768 915,800 945,810 980,835 1022,840 1045,720 1065,700 1080,700 1095,715 1110,695 1130,700 1145,720 1155,690 1162,620 1175,598 1205,600 1215,655 1245,660 1262,708 1280,700 1300,672 1340,680 1365,668 1400,643 1415,655 1435,692 1475,697 1508,697',
    '0,720 10,735 45,730 60,660 75,640 95,645 113,637 125,690 150,755 180,775 200,802 215,740 235,590 250,440 270,300 285,230 295,200 303,240 313,270 325,262 345,272 353,295 385,307 425,300 440,250 455,242 495,242 515,270 530,262 545,190 560,130 580,88 595,118 615,100 645,108 665,118 685,155 710,150 735,145 745,115 765,120 785,100 800,160 820,188 850,182 870,210 890,205 905,195 915,175 930,200 945,238 965,240 980,237 990,290 1000,350 1018,380 1050,370 1062,350 1090,358 1112,390 1125,433 1170,432 1230,428 1250,355 1270,343 1295,352 1345,355 1365,332',
    '0,325 20,302 35,298 45,320 55,375 75,440 88,475 103,450 120,385 140,380 150,372 170,368 185,410 205,450 225,510 240,525 250,525 262,420 280,380 300,398 312,402 330,470 350,505 370,520 405,525 415,512 425,520 440,560 455,588 480,572 525,573 540,585 555,590 570,585 590,560']
];
const spreadPts = join([
  '11.2,843 50,843 80,852 110,860 130,910 150,840 175,825 195,855 215,885 245,925 255,885 290,885 312,895 320,845 335,850 340,800 355,795 365,810 378,795 385,850 400,850 415,830 430,890 438,860 455,910 463,980 480,915 485,825 497,815 515,865 530,850 540,800 557,790 565,900 572,970 580,940 598,975 607,940 625,1015 640,985 655,965 670,1035 690,1010 700,1020 715,1000 730,1000 748,1015 765,930 785,895 805,825 815,840 835,850 855,785 870,815 890,835 895,870 918,825 925,885 938,930 950,900 963,935 973,845 993,935 1005,900 1020,895 1028,820 1036,725 1050,810 1065,750 1078,715 1085,790 1098,800 1104,685 1112,805 1128,850 1148,800 1156,640 1160,560 1164,700 1168,730 1180,745 1190,715 1202,645 1212,735 1230,725 1248,760 1265,720 1300,688 1340,690 1368,665 1380,710 1392,742 1405,705 1430,715 1445,735 1470,715 1495,760 1520,745',
  '0,740 10,745 25,765 40,745 48,700 57,655 68,690 73,670 85,755 108,790 115,815 123,780 130,820 150,810 160,850 180,835 190,855 203,830 210,750 220,690 232,605 238,625 245,530 252,460 262,380 272,405 278,340 288,270 295,310 303,385 312,360 318,310 330,360 345,385 355,315 370,390 385,330 400,335 425,325 440,250 450,275 463,325 480,340 490,300 505,270 515,300 530,280 545,180 558,150 578,130 590,205 607,120 625,160 640,175 655,185 680,205 698,145 712,230 725,200 732,125 742,120 745,185 757,270 767,220 780,320 797,205 810,240 822,290 835,340 848,310 860,230 875,215 890,270 912,380 925,290 932,270 942,360 950,420 967,500 978,370 985,400 1000,490 1018,490 1027,405 1045,395 1055,385 1065,470 1087,440 1100,470 1115,470 1125,450 1160,443 1180,430 1215,435 1235,380 1255,365 1268,370 1283,405 1298,365 1320,400 1345,345 1365,345',
  '0,345 13,440 25,430 40,520 50,495 62,535 80,520 95,470 105,460 115,395 130,430 140,450 145,550 155,460 165,510 183,570 195,590 210,540 227,635 238,560 250,590 257,385 263,480 275,455 283,510 295,520 313,610 325,540 335,570 340,530 357,580 370,540 385,570 400,580 410,625 430,605 455,605 475,572 490,590 520,610 540,600 555,625 575,570 585,555 592,565'
], WIDE, 430);
path(spread, 'M5 617.5H1395', 'red');
path(spread, 'M5 622.5H1395', 'blue');
bands.forEach(([colour, ...s]) => path(spread, line(join(s, WIDE, 430)), colour));
const tail = spreadPts.filter(p => p[0] >= 1394);
path(spread, line(tail.map(([x, y]) => [x, y + 4])), 'blue', 1);

// The feed moves in one-pixel steps and holds its level between ticks.
let d = '', drift = 0;
for (let x = 5; x <= 1496; x++) {
  if (x % 2) drift = drift * 0.3 + (rand() - 0.5) * (x < 1394 ? 9 : 3);
  const quiet = x < 45 || (x > 575 && x < 600) || (x > 1140 && x < 1180);
  const y = Math.round(at(spreadPts, x) + drift * (quiet ? 0.3 : 1));
  d += d ? `V${y}H${x}` : `M${x} ${y}`;
}
path(spread, d, 'cyan', 2);
path(spread, line(tail.map(([x, y]) => [x, y - 3])), 'red', 1);
```
